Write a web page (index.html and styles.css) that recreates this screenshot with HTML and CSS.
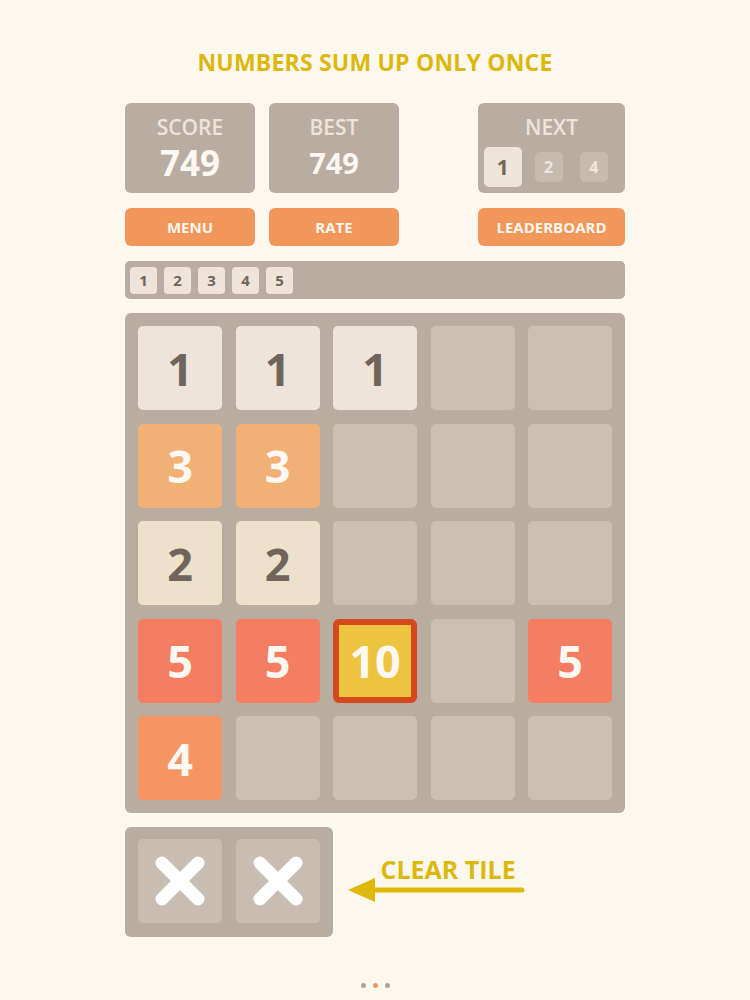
FILE: index.html
```html
<!DOCTYPE html>
<html>
<head>
<meta charset="utf-8">
<link rel="stylesheet" href="styles.css">
</head>
<body>
<div class="page">
  <h1 class="title">NUMBERS SUM UP ONLY ONCE</h1>

  <div class="header">
    <div class="box stat">
      <div class="label">SCORE</div>
      <div class="value big">749</div>
    </div>
    <div class="box stat">
      <div class="label">BEST</div>
      <div class="value">749</div>
    </div>
    <div class="box next">
      <div class="label">NEXT</div>
      <div class="next-tiles">
        <div class="nt nt-main">1</div>
        <div class="nt nt-dim">2</div>
        <div class="nt nt-dim">4</div>
      </div>
    </div>
  </div>

  <div class="buttons">
    <div class="btn">MENU</div>
    <div class="btn">RATE</div>
    <div class="btn btn-wide">LEADERBOARD</div>
  </div>

  <div class="strip">
    <div class="st">1</div>
    <div class="st">2</div>
    <div class="st">3</div>
    <div class="st">4</div>
    <div class="st">5</div>
  </div>

  <div class="board">
    <div class="cell t1">1</div>
    <div class="cell t1">1</div>
    <div class="cell t1">1</div>
    <div class="cell"></div>
    <div class="cell"></div>

    <div class="cell t3">3</div>
    <div class="cell t3">3</div>
    <div class="cell"></div>
    <div class="cell"></div>
    <div class="cell"></div>

    <div class="cell t2">2</div>
    <div class="cell t2">2</div>
    <div class="cell"></div>
    <div class="cell"></div>
    <div class="cell"></div>

    <div class="cell t5">5</div>
    <div class="cell t5">5</div>
    <div class="cell t10">10</div>
    <div class="cell"></div>
    <div class="cell t5">5</div>

    <div class="cell t4">4</div>
    <div class="cell"></div>
    <div class="cell"></div>
    <div class="cell"></div>
    <div class="cell"></div>
  </div>

  <div class="clear-row">
    <div class="clear-box">
      <div class="cell xcell">
        <svg width="50" height="50" viewBox="0 0 50 50"><path d="M7 7 L43 43 M43 7 L7 43" stroke="#ffffff" stroke-width="13" stroke-linecap="round" fill="none"/></svg>
      </div>
      <div class="cell xcell">
        <svg width="50" height="50" viewBox="0 0 50 50"><path d="M7 7 L43 43 M43 7 L7 43" stroke="#ffffff" stroke-width="13" stroke-linecap="round" fill="none"/></svg>
      </div>
    </div>
    <div class="hint">
      <div class="hint-text">CLEAR TILE</div>
      <svg class="arrow" width="178" height="28" viewBox="0 0 178 28"><polygon points="0,13 27,1 27,25" fill="#dfb80a"/><line x1="20" y1="13" x2="174" y2="13" stroke="#dfb80a" stroke-width="5" stroke-linecap="round"/></svg>
    </div>
  </div>

  <div class="dots">
    <span class="dot"></span>
    <span class="dot dot-on"></span>
    <span class="dot"></span>
  </div>
</div>
</body>
</html>
```

FILE: styles.css
```css
html, body {
  margin: 0;
  padding: 0;
  background: #fcf8ee;
}
body {
  font-family: "Open Sans", "Noto Sans", sans-serif;
  width: 750px;
  height: 1000px;
  overflow: hidden;
}
.page {
  width: 500px;
  margin-left: 125px;
  padding-top: 45px;
}
.title {
  margin: 0;
  height: 34px;
  line-height: 34px;
  text-align: center;
  font-size: 23px;
  font-weight: 700;
  color: #dcb80c;
  letter-spacing: 0.2px;
}
.header {
  margin-top: 24px;
  display: flex;
  gap: 14px;
  height: 90px;
}
.box {
  background: #b9ada1;
  border-radius: 6px;
  box-sizing: border-box;
}
.stat {
  width: 130px;
  height: 90px;
  display: flex;
  flex-direction: column;
  align-items: center;
  padding-top: 10px;
}
.label {
  font-size: 21px;
  line-height: 28px;
  color: #eee4da;
  font-weight: 600;
}
.value {
  font-size: 29px;
  line-height: 40px;
  font-weight: 700;
  color: #fdf8f2;
  margin-top: 2px;
}
.value.big {
  font-size: 35px;
  line-height: 44px;
  margin-top: 0;
}
.next {
  margin-left: auto;
  width: 147px;
  height: 90px;
  display: flex;
  flex-direction: column;
  align-items: center;
  padding-top: 10px;
}
.next-tiles {
  display: flex;
  align-items: center;
  width: 147px;
  padding-left: 6px;
  box-sizing: border-box;
  margin-top: 6px;
}
.nt {
  display: flex;
  align-items: center;
  justify-content: center;
  font-weight: 700;
  border-radius: 5px;
}
.nt-main {
  width: 40px;
  height: 40px;
  background: #eee4da;
  color: #6f655c;
  font-size: 21px;
  margin-right: 13px;
}
.nt-dim {
  width: 30px;
  height: 30px;
  background: #c7bbae;
  color: #efe7de;
  font-size: 16px;
  margin-right: 17px;
}
.buttons {
  margin-top: 15px;
  display: flex;
  gap: 14px;
}
.btn {
  width: 130px;
  height: 38px;
  border-radius: 6px;
  background: #f2975b;
  color: #fdf5ec;
  font-size: 15px;
  font-weight: 700;
  display: flex;
  align-items: center;
  justify-content: center;
}
.btn-wide {
  margin-left: auto;
  width: 147px;
}
.strip {
  margin-top: 15px;
  height: 38px;
  background: #b9ada1;
  border-radius: 5px;
  display: flex;
  align-items: center;
  gap: 7px;
  padding-left: 5px;
}
.st {
  width: 27px;
  height: 27px;
  background: #eee4da;
  border-radius: 4px;
  color: #6f655c;
  font-size: 15px;
  font-weight: 700;
  display: flex;
  align-items: center;
  justify-content: center;
}
.board {
  margin-top: 14px;
  width: 500px;
  height: 500px;
  box-sizing: border-box;
  padding: 13px;
  background: #b9ada1;
  border-radius: 6px;
  display: grid;
  grid-template-columns: repeat(5, 84px);
  grid-template-rows: repeat(5, 84px);
  gap: 13.5px;
}
.cell {
  width: 84px;
  height: 84px;
  box-sizing: border-box;
  border-radius: 5px;
  background: #cbc0b3;
  display: flex;
  align-items: center;
  justify-content: center;
  font-size: 45px;
  font-weight: 700;
  color: #fdf8f2;
}
.t1 { background: #eee4da; color: #6f655c; }
.t2 { background: #ede1cb; color: #6f655c; }
.t3 { background: #f1b074; }
.t4 { background: #f59561; }
.t5 { background: #f57d62; }
.t10 {
  background: #edc43f;
  border: 6px solid #d4481b;
  border-radius: 6px;
}
.clear-row {
  margin-top: 14px;
  display: flex;
  align-items: flex-start;
}
.clear-box {
  width: 207.5px;
  height: 110px;
  box-sizing: border-box;
  padding: 12px 13px 13px 13px;
  background: #b9ada1;
  border-radius: 6px;
  display: flex;
  gap: 13.5px;
}
.xcell {
  background: #c8bdb0;
}
.hint {
  margin-left: 15px;
  margin-top: 27px;
  display: flex;
  flex-direction: column;
}
.hint-text {
  margin-left: 33px;
  font-size: 25px;
  line-height: 30px;
  font-weight: 700;
  color: #dcb80c;
}
.arrow {
  display: block;
  margin-top: -7px;
}
.dots {
  margin-top: 46px;
  display: flex;
  justify-content: center;
  gap: 7px;
}
.dot {
  width: 5px;
  height: 5px;
  border-radius: 50%;
  background: #a8a39d;
}
.dot-on {
  background: #ef9a5c;
}
```
